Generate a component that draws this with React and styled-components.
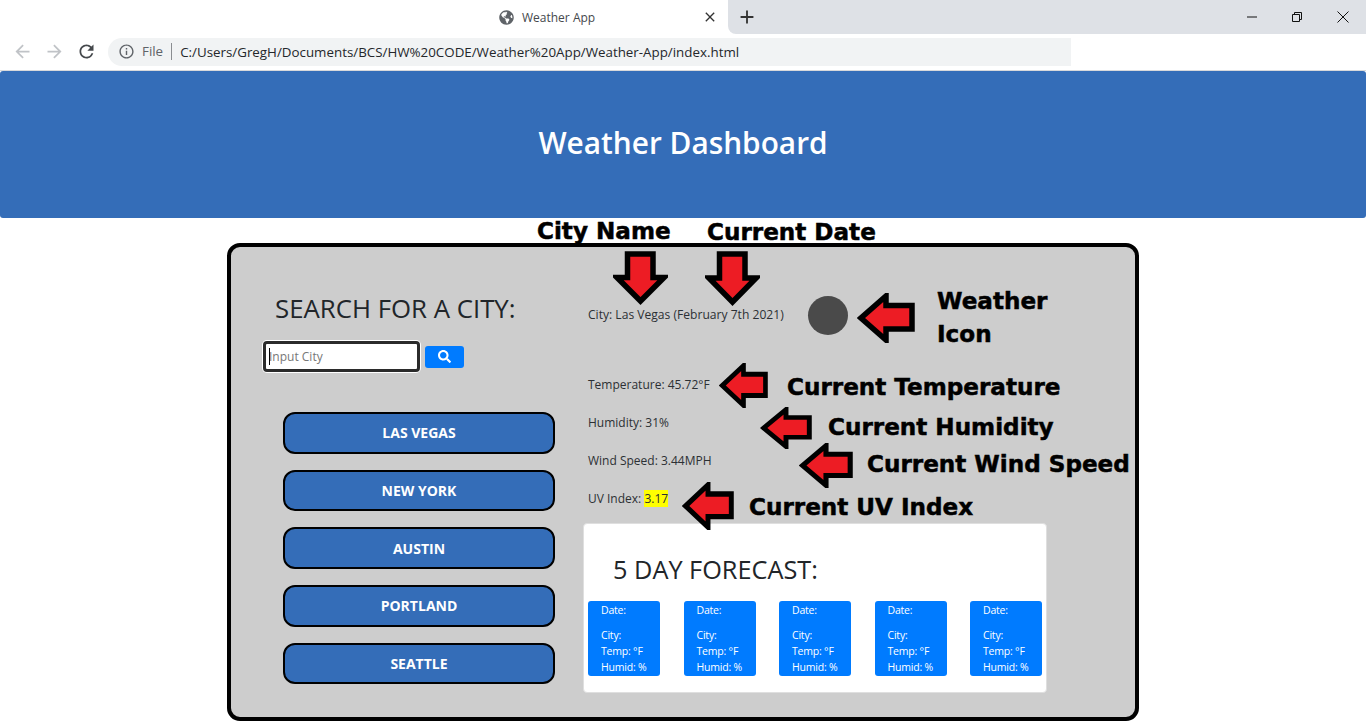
import React from "react";
import styled, { createGlobalStyle } from "styled-components";
import { MdArrowBack, MdArrowForward, MdRefresh, MdInfoOutline, MdClose, MdAdd } from "react-icons/md";
import { FaGlobeAmericas, FaSearch } from "react-icons/fa";

const cities = ["LAS VEGAS", "NEW YORK", "AUSTIN", "PORTLAND", "SEATTLE"];
const days = [1, 2, 3, 4, 5];

const notes = [
  { text: "City Name", x: 537, y: 217 },
  { text: "Current Date", x: 707, y: 218 },
  { text: "Weather", x: 937, y: 287 },
  { text: "Icon", x: 937, y: 320 },
  { text: "Current Temperature", x: 787, y: 373 },
  { text: "Current Humidity", x: 828, y: 413 },
  { text: "Current Wind Speed", x: 867, y: 450 },
  { text: "Current UV Index", x: 749, y: 493 },
];

const arrows = [
  { dir: "down", x: 613, y: 251, w: 55, h: 54 },
  { dir: "down", x: 705, y: 251, w: 55, h: 55 },
  { dir: "left", x: 857, y: 293, w: 58, h: 50 },
  { dir: "left", x: 719, y: 363, w: 49, h: 45 },
  { dir: "left", x: 760, y: 407, w: 52, h: 42 },
  { dir: "left", x: 799, y: 443, w: 54, h: 45 },
  { dir: "left", x: 682, y: 482, w: 52, h: 48 },
];

const Arrow = ({ dir, x, y, w, h }) => (
  <ArrowBox
    $x={x}
    $y={y}
    width={w}
    height={h}
    viewBox={dir === "down" ? "0 0 55 54" : "0 0 58 50"}
    preserveAspectRatio="none"
  >
    {dir === "down" ? (
      <polygon points="14.5,3 40,3 40,26.5 51,26.5 27.5,50 4,26.5 14.5,26.5" fill="#ed1c24" stroke="#000" strokeWidth="5.5" />
    ) : (
      <polygon points="55,12.5 55,36 29,36 29,47 4,25 29,3 29,12.5" fill="#ed1c24" stroke="#000" strokeWidth="5.5" />
    )}
  </ArrowBox>
);

const App = () => {
  return (
    <Page>
      <GlobalStyle />
      <TabStrip>
        <TabGap />
        <Tab>
          <FaGlobeAmericas size={15} color="#5f6368" />
          <TabTitle>Weather App</TabTitle>
          <MdClose size={16} color="#333" />
        </Tab>
        <TabRest>
          <MdAdd size={22} color="#333" />
          <WindowButtons>
            <svg width="12" height="12" viewBox="0 0 12 12"><path d="M1 6h10" stroke="#111" fill="none" /></svg>
            <svg width="12" height="12" viewBox="0 0 12 12"><path d="M1.5 3.5h7v7h-7zM3.5 3.5v-2h7v7h-2" stroke="#111" fill="none" /></svg>
            <svg width="14" height="14" viewBox="0 0 14 14"><path d="M1.5 1.5l11 11M12.5 1.5l-11 11" stroke="#111" fill="none" /></svg>
          </WindowButtons>
        </TabRest>
      </TabStrip>
      <AddressRow>
        <NavIcons>
          <MdArrowBack size={21} color="#c0c3c7" />
          <MdArrowForward size={21} color="#c0c3c7" />
          <MdRefresh size={21} color="#45484c" />
        </NavIcons>
        <AddressBox>
          <MdInfoOutline size={17} color="#5f6368" />
          <FileLabel>File</FileLabel>
          <Url>C:/Users/GregH/Documents/BCS/HW%20CODE/Weather%20App/Weather-App/index.html</Url>
        </AddressBox>
      </AddressRow>
      <Header>
        <Title>Weather Dashboard</Title>
      </Header>
      <Card>
        <LeftColumn>
          <SearchTitle>SEARCH FOR A CITY:</SearchTitle>
          <SearchRow>
            <InputWrap>
              <CityInput placeholder="Input City" />
              <Caret />
            </InputWrap>
            <SearchButton aria-label="search"><FaSearch size={13} /></SearchButton>
          </SearchRow>
          <CityList>
            {cities.map((city) => (
              <CityButton key={city}>{city}</CityButton>
            ))}
          </CityList>
        </LeftColumn>
        <RightColumn>
          <CityRow>
            <CityText>City: Las Vegas (February 7th 2021)</CityText>
            <WeatherIcon />
          </CityRow>
          <Stat>Temperature: 45.72°F</Stat>
          <Stat>Humidity: 31%</Stat>
          <Stat>Wind Speed: 3.44MPH</Stat>
          <Stat>UV Index: <UvValue>3.17</UvValue></Stat>
          <ForecastPanel>
            <ForecastTitle>5 DAY FORECAST:</ForecastTitle>
            <ForecastRow>
              {days.map((day) => (
                <DayCard key={day}>
                  <DateLine>Date:</DateLine>
                  <div>City:</div>
                  <div>Temp: °F</div>
                  <div>Humid: %</div>
                </DayCard>
              ))}
            </ForecastRow>
          </ForecastPanel>
        </RightColumn>
      </Card>
      {arrows.map((a, idx) => (
        <Arrow key={idx} {...a} />
      ))}
      {notes.map((n) => (
        <Note key={n.text} $x={n.x} $y={n.y}>{n.text}</Note>
      ))}
    </Page>
  );
};

const GlobalStyle = createGlobalStyle`
  html, body {
    margin: 0;
    height: 728px;
    overflow: hidden;
    background: #fff;
  }
  * {
    box-sizing: border-box;
  }
`;

const Page = styled.div`
  position: relative;
  width: 1366px;
  height: 728px;
  font-family: "Open Sans", "Noto Sans", sans-serif;
  color: #212529;
`;

const TabStrip = styled.div`
  display: flex;
  height: 34px;
`;

const TabGap = styled.div`
  width: 488px;
`;

const Tab = styled.div`
  width: 240px;
  display: flex;
  align-items: center;
  padding: 0 10px 0 11px;
  gap: 8px;
`;

const TabTitle = styled.span`
  flex: 1;
  font-size: 12px;
  color: #45484c;
`;

const TabRest = styled.div`
  flex: 1;
  display: flex;
  align-items: center;
  padding-left: 8px;
  background: #dee1e6;
  border-bottom-left-radius: 8px;
`;

const WindowButtons = styled.div`
  margin-left: auto;
  display: flex;
  align-items: center;
  gap: 33px;
  padding-right: 16px;
`;

const AddressRow = styled.div`
  height: 37px;
  display: flex;
  align-items: center;
  padding-bottom: 1px;
  border-bottom: 1px solid #d8d9db;
`;

const NavIcons = styled.div`
  width: 108px;
  display: flex;
  align-items: center;
  gap: 11px;
  padding-left: 12px;
`;

const AddressBox = styled.div`
  width: 963px;
  height: 28px;
  display: flex;
  align-items: center;
  padding-left: 10px;
  background: #f1f3f4;
  border-radius: 14px 0 0 14px;
  font-size: 13.35px;
`;

const FileLabel = styled.span`
  margin-left: 7px;
  padding-right: 8px;
  border-right: 1px solid #8a8d91;
  line-height: 17px;
  color: #5f6368;
`;

const Url = styled.span`
  margin-left: 8px;
  color: #24272b;
`;

const Header = styled.header`
  height: 147px;
  display: flex;
  align-items: center;
  justify-content: center;
  padding-bottom: 4px;
  background: #346db8;
  border-radius: 3px;
`;

const Title = styled.h1`
  margin: 0;
  font-size: 29.8px;
  font-weight: 600;
  color: #fff;
`;

const Card = styled.main`
  width: 912px;
  height: 478px;
  margin: 25px auto 0;
  display: flex;
  background: #cdcdcd;
  border: 4px solid #000;
  border-radius: 13px;
`;

const LeftColumn = styled.div`
  width: 352px;
  padding: 44px 0 0 32px;
`;

const SearchTitle = styled.h3`
  margin: 0 0 0 12px;
  font-size: 25.8px;
  line-height: 34px;
  font-weight: 400;
`;

const SearchRow = styled.div`
  display: flex;
  align-items: center;
  gap: 5px;
  margin-top: 16px;
`;

const InputWrap = styled.div`
  position: relative;
  display: flex;
`;

const CityInput = styled.input`
  width: 157px;
  height: 31px;
  padding: 0 3px;
  font: 12px "Open Sans", sans-serif;
  background: #fff;
  border: 3.5px solid #2b2b2b;
  border-radius: 4px;
  outline: none;
  box-shadow: 0 0 0 1px #fff;

  &::placeholder {
    color: #777;
  }
`;

const Caret = styled.span`
  position: absolute;
  left: 6px;
  top: 7px;
  width: 1px;
  height: 17px;
  background: #000;
`;

const SearchButton = styled.button`
  width: 39px;
  height: 22px;
  display: flex;
  align-items: center;
  justify-content: center;
  padding: 0;
  color: #fff;
  background: #007bff;
  border: none;
  border-radius: 3px;
`;

const CityList = styled.div`
  display: flex;
  flex-direction: column;
  gap: 15.9px;
  margin: 40px 0 0 20px;
`;

const CityButton = styled.button`
  width: 272px;
  height: 41.75px;
  padding: 0;
  font: 700 14px "Open Sans", sans-serif;
  color: #fff;
  background: #346db8;
  border: 2px solid #000;
  border-radius: 12px;
`;

const RightColumn = styled.div`
  flex: 1;
  padding-top: 49px;
  font-size: 12px;
  color: #2c3034;
`;

const CityRow = styled.div`
  display: flex;
  align-items: center;
  height: 39px;
  padding-left: 5px;
  margin-bottom: 41px;
`;

const CityText = styled.span`
  width: 220px;
  font-size: 12.1px;
  padding-bottom: 2px;
`;

const WeatherIcon = styled.div`
  width: 40px;
  height: 39px;
  background: #4a4a4a;
  border-radius: 50%;
`;

const Stat = styled.div`
  height: 18px;
  line-height: 18px;
  padding-left: 5px;
  margin-top: 20px;
`;

const UvValue = styled.span`
  background: #ffff00;
`;

const ForecastPanel = styled.section`
  width: 464px;
  height: 170px;
  margin-top: 15px;
  padding: 28px 4px 0;
  background: #fff;
  border: 1px solid #dfdfdf;
  border-radius: 4px;
`;

const ForecastTitle = styled.h3`
  margin: 0 0 15px 25px;
  font-size: 25.3px;
  line-height: 34px;
  font-weight: 400;
  color: #212529;
`;

const ForecastRow = styled.div`
  display: flex;
  justify-content: space-between;
`;

const DayCard = styled.div`
  width: 72px;
  height: 75px;
  padding: 1px 0 0 13px;
  font-size: 10.5px;
  letter-spacing: -0.2px;
  line-height: 16px;
  color: #fff;
  background: #007bff;
  border-radius: 3px;
`;

const DateLine = styled.div`
  margin-bottom: 9px;
`;

const ArrowBox = styled.svg`
  position: absolute;
  left: ${(props) => props.$x}px;
  top: ${(props) => props.$y}px;
`;

const Note = styled.div`
  position: absolute;
  left: ${(props) => props.$x}px;
  top: ${(props) => props.$y}px;
  font-family: "DejaVu Sans", sans-serif;
  font-size: 23.1px;
  line-height: 28px;
  font-weight: 700;
  color: #000;
  white-space: nowrap;
  -webkit-text-stroke: 0.5px #000;
`;

export default App;
